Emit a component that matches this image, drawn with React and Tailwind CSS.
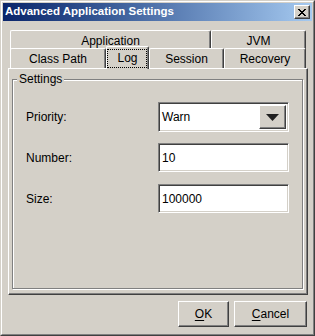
export default function App() {
  const raised =
    'border border-t-white border-l-white border-r-[#404040] border-b-[#404040] shadow-[inset_-1px_-1px_0_#808080]'
  const sunken =
    'border border-t-[#808080] border-l-[#808080] border-r-white border-b-white shadow-[inset_1px_1px_0_#404040,inset_-1px_-1px_0_#d4d0c8] bg-white'
  const tab =
    'flex items-center justify-center border-t border-l border-r border-t-white border-l-white border-r-[#404040] shadow-[inset_-1px_0_0_#808080] rounded-t-[2px] bg-[#d4d0c8]'

  const closeGlyph = [
    [0, 0, 2], [6, 0, 2],
    [1, 1, 2], [5, 1, 2],
    [2, 2, 4],
    [3, 3, 2],
    [2, 4, 4],
    [1, 5, 2], [5, 5, 2],
    [0, 6, 2], [6, 6, 2],
  ]

  return (
    <div className="w-[315px] h-[336px] border border-t-[#d4d0c8] border-l-[#d4d0c8] border-r-[#404040] border-b-[#404040] bg-[#d4d0c8] font-['Liberation_Sans',Arial,sans-serif] text-[12px] text-black leading-none">
      <div className="h-full border border-t-white border-l-white border-r-[#808080] border-b-[#808080] p-px flex flex-col">
        {/* Title bar */}
        <div className="h-[18px] flex items-center justify-between pl-[2px] pr-[2px] bg-linear-to-r from-[#0a246a] to-[#a6caf0]">
          <span className="text-white font-bold text-[11.5px]">Advanced Application Settings</span>
          <div className={`w-[16px] h-[14px] bg-[#d4d0c8] flex items-center justify-center ${raised}`}>
            <svg width="8" height="7" viewBox="0 0 8 7" shapeRendering="crispEdges">
              {closeGlyph.map(([x, y, w], i) => (
                <rect key={i} x={x} y={y} width={w} height="1" fill="#000" />
              ))}
            </svg>
          </div>
        </div>

        {/* Tabs + panel */}
        <div className="pt-[9px] pl-[5px] pr-[4px]">
          <div className="ml-[2px] flex flex-col">
            <div className="flex h-[18px]">
              <div className={`${tab} w-[201px] h-[20px]`}>Application</div>
              <div className={`${tab} w-[95px] h-[20px]`}>JVM</div>
            </div>
            <div className="flex h-[20px] items-end relative">
              <div className={`${tab} w-[96px] h-[20px]`}>Class Path</div>
              <div className={`${tab} w-[43px] h-[23px] relative top-px z-10`}>
                <div className="absolute left-0 right-px top-[2px] bottom-[1px] border border-dotted border-black" />
                Log
              </div>
              <div className={`${tab} w-[75px] h-[20px]`}>Session</div>
              <div className={`${tab} w-[82px] h-[20px]`}>Recovery</div>
            </div>
          </div>

          <div className={`h-[227px] pt-[10px] pl-[3px] pr-[4px] ${raised}`}>
            <div className="relative h-[210px] border border-[#808080] shadow-[1px_1px_0_#fff,inset_1px_1px_0_#fff] pt-[22px] pl-[13px] pr-[13px]">
              <span className="absolute left-[4px] top-[-7px] px-[2px] bg-[#d4d0c8]">Settings</span>

              <div className="flex items-center justify-between h-[30px]">
                <span>Priority:</span>
                <div className={`w-[131px] h-full flex items-center p-[2px] ${sunken}`}>
                  <span className="flex-1 pl-[1px]">Warn</span>
                  <div className={`w-[27px] h-full bg-[#d4d0c8] flex items-center justify-center ${raised}`}>
                    <svg width="13" height="7" viewBox="0 0 13 7">
                      <polygon points="0,0 13,0 6.5,7" fill="#202020" />
                    </svg>
                  </div>
                </div>
              </div>

              <div className="flex items-center justify-between h-[29px] mt-[11px]">
                <span>Number:</span>
                <div className={`w-[131px] h-full flex items-center pl-[3px] ${sunken}`}>10</div>
              </div>

              <div className="flex items-center justify-between h-[29px] mt-[12px]">
                <span>Size:</span>
                <div className={`w-[131px] h-full flex items-center pl-[3px] ${sunken}`}>100000</div>
              </div>
            </div>
          </div>
        </div>

        {/* Buttons */}
        <div className="flex justify-end gap-[5px] pt-[6px] pr-[5px]">
          <button className={`w-[51px] h-[26px] bg-[#d4d0c8] flex items-center justify-center ${raised}`}>
            <span><span className="underline underline-offset-2">O</span>K</span>
          </button>
          <button className={`w-[73px] h-[26px] bg-[#d4d0c8] flex items-center justify-center ${raised}`}>
            <span><span className="underline underline-offset-2">C</span>ancel</span>
          </button>
        </div>
      </div>
    </div>
  )
}
